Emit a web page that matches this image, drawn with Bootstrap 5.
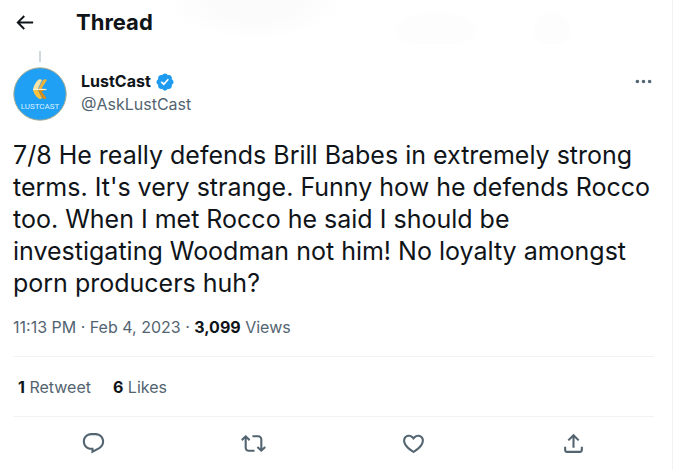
<!DOCTYPE html>
<html lang="en">
<head>
<meta charset="utf-8">
<meta name="viewport" content="width=device-width, initial-scale=1">
<title>Thread</title>
<link href="https://cdn.jsdelivr.net/npm/bootstrap@5.3.0/dist/css/bootstrap.min.css" rel="stylesheet">
<style>
  body { font-family: Inter, "Open Sans", sans-serif; color: #0f1419; background: #fff; }
  .thread { border-right: 1px solid #eff3f4; margin-right: 4px; padding-left: 13px; padding-right: 18px; }
  .top-bar { height: 44px; gap: 32px; margin-left: -13px; margin-right: -18px; padding-left: 13px;
    background:
      radial-gradient(circle 20px at 552px 30px, #fdfdfd 80%, transparent),
      radial-gradient(ellipse 44px 20px at 436px 30px, #fdfdfd 80%, transparent),
      radial-gradient(ellipse 90px 40px at 255px 0, #fbfbfb 50%, transparent); }
  .top-bar h1 { font-size: 22px; font-weight: 700; line-height: 28px; }
  .icon-btn { line-height: 0; color: inherit; }
  .icon-btn svg, .badge-icon { fill: currentColor; }
  .rail { width: 2px; height: 11px; margin: 7px 0 5px 26px; background: #cfd9de; }
  .author { gap: 14px; }
  .names { padding-top: 3px; }
  .person { font-size: 16px; font-weight: 700; line-height: 23px; color: #0f1419; }
  .handle, .meta { color: #536471; font-size: 16px; }
  .handle { line-height: 23px; }
  .badge-icon { color: #1d9bf0; }
  .post { font-size: 25px; line-height: 32px; margin: 18px 0; }
  .meta { line-height: 20px; }
  .meta a { color: inherit; text-decoration: none; }
  .meta strong { color: #0f1419; }
  .when { padding-bottom: 19px; }
  .counts { gap: 22px; padding: 20px 5px 19px; border-color: #eff3f4 !important; }
  .actions { padding: 13px 0; border-color: #eff3f4 !important; }
  .soft { color: #536471; }
</style>
<script src="https://cdn.jsdelivr.net/npm/bootstrap@5.3.0/dist/js/bootstrap.bundle.min.js"></script>
</head>
<body>
<main class="thread min-vh-100">
  <header class="top-bar d-flex align-items-center">
    <button type="button" class="btn p-0 border-0 icon-btn" aria-label="Back">
      <svg width="23" height="23" viewBox="0 0 24 24"><path d="M7.414 13l5.043 5.04-1.414 1.42L3.586 12l7.457-7.46 1.414 1.42L7.414 11H21v2H7.414z"/></svg>
    </button>
    <h1 class="mb-0 ms-2">Thread</h1>
  </header>
  <div class="rail"></div>
  <article>
    <div class="author d-flex align-items-start">
      <svg width="54" height="54" viewBox="0 0 54 54" role="img" aria-label="LustCast avatar">
        <circle cx="27" cy="27" r="26.2" fill="#20a0f5" stroke="#a9ab8d"/>
        <path d="M25 13 Q27 11.500 29 13 L24.500 22.500 L20 22.500 Q21 17 25 13Z" fill="#fbe3a6"/>
        <path d="M30 13 Q32 11.500 34 13 L28.500 21.500 L33.500 22.500 L25 22.500Z" fill="#efb23d"/>
        <path d="M20 22.500 L24.500 22.500 L29 31 Q27 33 25 31 Q21 28 20 22.500Z" fill="#ffc33b"/>
        <path d="M25 23 L33.500 22.500 L28.500 24.500 L33.500 31 Q31 33 29.500 31Z" fill="#d98b16"/>
        <path d="M20 22.500 L33.500 22.500" stroke="#fff0cf" stroke-width="1.2"/>
        <text x="27" y="42" text-anchor="middle" font-family="Roboto, sans-serif" font-size="8" fill="#d9f1ff">LUSTCAST</text>
      </svg>
      <div class="names flex-grow-1">
        <div class="d-flex align-items-center gap-1">
          <a href="#" class="person text-decoration-none">LustCast</a>
          <svg class="badge-icon" width="20" height="20" viewBox="0 0 24 24" role="img" aria-label="Verified account"><path d="M22.25 12c0-1.43-.88-2.67-2.19-3.34.46-1.39.2-2.9-.81-3.91s-2.52-1.27-3.91-.81c-.66-1.31-1.91-2.19-3.34-2.19s-2.67.88-3.33 2.19c-1.4-.46-2.91-.2-3.92.81s-1.26 2.52-.8 3.91c-1.31.67-2.2 1.91-2.2 3.34s.89 2.67 2.2 3.34c-.46 1.39-.21 2.9.8 3.91s2.52 1.26 3.91.81c.67 1.31 1.91 2.19 3.34 2.19s2.68-.88 3.34-2.19c1.39.45 2.9.2 3.91-.81s1.27-2.52.81-3.91c1.31-.67 2.19-1.91 2.19-3.34zm-11.71 4.2L6.8 12.46l1.41-1.42 2.26 2.26 4.8-5.23 1.47 1.36-6.2 6.77z"/></svg>
        </div>
        <a href="#" class="handle d-block text-decoration-none">@AskLustCast</a>
      </div>
      <button type="button" class="btn p-0 pt-1 border-0 icon-btn soft" aria-label="More">
        <svg width="21" height="21" viewBox="0 0 24 24"><path d="M3 12c0-1.1.9-2 2-2s2 .9 2 2-.9 2-2 2-2-.9-2-2zm9 2c1.1 0 2-.9 2-2s-.9-2-2-2-2 .9-2 2 .9 2 2 2zm7 0c1.1 0 2-.9 2-2s-.9-2-2-2-2 .9-2 2 .9 2 2 2z"/></svg>
      </button>
    </div>
    <p class="post">7/8 He really defends Brill Babes in extremely strong terms. It's very strange. Funny how he defends Rocco too. When I met Rocco he said I should be investigating Woodman not him! No loyalty amongst porn producers huh?</p>
    <div class="meta when"><a href="#">11:13 PM · Feb 4, 2023</a> · <strong>3,099</strong> Views</div>
    <div class="meta counts d-flex border-top">
      <a href="#"><strong>1</strong> Retweet</a>
      <a href="#"><strong>6</strong> Likes</a>
    </div>
    <div class="actions row g-0 border-top text-center">
      <div class="col"><button type="button" class="btn p-0 border-0 icon-btn soft" aria-label="Reply"><svg width="25" height="25" viewBox="0 0 24 24"><path d="M1.751 10c0-4.42 3.584-8 8.005-8h4.366c4.49 0 8.129 3.64 8.129 8.13 0 2.96-1.607 5.68-4.196 7.11l-8.054 4.46v-3.69h-.067c-4.49.1-8.183-3.51-8.183-8.01zm8.005-6c-3.317 0-6.005 2.69-6.005 6 0 3.37 2.77 6.08 6.138 6.01l.351-.01h1.761v2.3l5.087-2.81c1.951-1.08 3.163-3.13 3.163-5.36 0-3.39-2.744-6.13-6.129-6.13H9.756z"/></svg></button></div>
      <div class="col"><button type="button" class="btn p-0 border-0 icon-btn soft" aria-label="Retweet"><svg width="25" height="25" viewBox="0 0 24 24"><path d="M4.5 3.88l4.432 4.14-1.364 1.46L5.5 7.55V16c0 1.1.896 2 2 2H13v2H7.5c-2.209 0-4-1.79-4-4V7.55L1.432 9.48.068 8.02 4.5 3.88zM16.5 6H11V4h5.5c2.209 0 4 1.79 4 4v8.45l2.068-1.93 1.364 1.46-4.432 4.14-4.432-4.14 1.364-1.46 2.068 1.93V8c0-1.1-.896-2-2-2z"/></svg></button></div>
      <div class="col"><button type="button" class="btn p-0 border-0 icon-btn soft" aria-label="Like"><svg width="25" height="25" viewBox="0 0 24 24"><path d="M16.697 5.5c-1.222-.06-2.679.51-3.89 2.16l-.805 1.09-.806-1.09C9.984 6.01 8.526 5.44 7.304 5.5c-1.243.07-2.349.78-2.91 1.91-.552 1.12-.633 2.78.479 4.82 1.074 1.97 3.257 4.27 7.129 6.61 3.87-2.34 6.052-4.64 7.126-6.61 1.111-2.04 1.03-3.7.477-4.82-.561-1.13-1.666-1.84-2.908-1.91zm4.187 7.69c-1.351 2.48-4.001 5.12-8.379 7.67l-.503.3-.504-.3c-4.379-2.55-7.029-5.19-8.382-7.67-1.36-2.5-1.41-4.86-.514-6.67.887-1.79 2.647-2.91 4.601-3.01 1.651-.09 3.368.56 4.798 2.01 1.429-1.45 3.146-2.1 4.796-2.01 1.954.1 3.714 1.22 4.601 3.01.896 1.81.846 4.17-.514 6.67z"/></svg></button></div>
      <div class="col"><button type="button" class="btn p-0 border-0 icon-btn soft" aria-label="Share"><svg width="25" height="25" viewBox="0 0 24 24"><path d="M12 2.59l5.7 5.7-1.41 1.42L13 6.41V16h-2V6.41l-3.3 3.3-1.41-1.42L12 2.59zM21 15l-.02 3.51c0 1.38-1.12 2.49-2.5 2.49H5.5C4.11 21 3 19.88 3 18.5V15h2v3.5c0 .28.22.5.5.5h12.98c.28 0 .5-.22.5-.5L19 15h2z"/></svg></button></div>
    </div>
  </article>
</main>
</body>
</html>
